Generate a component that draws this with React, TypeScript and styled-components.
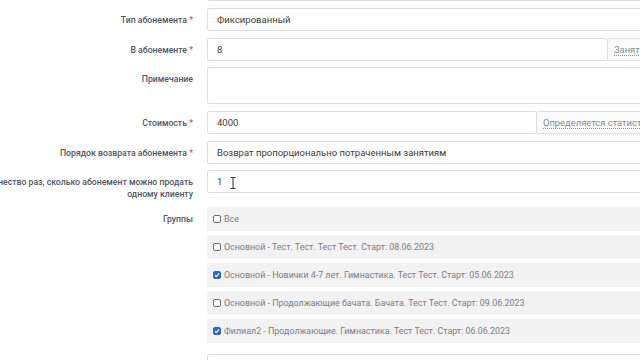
import React from 'react';
import styled, { createGlobalStyle } from 'styled-components';

const GlobalStyle = createGlobalStyle`
  html, body {
    margin: 0;
    padding: 0;
    background: #fff;
    overflow: hidden;
  }
  body {
    width: 640px;
    height: 360px;
    font-family: Roboto, "Noto Sans", "Liberation Sans", sans-serif;
  }
`;

const Page = styled.div`
  width: 640px;
  height: 360px;
  overflow: hidden;
`;

const Form = styled.div`
  width: 817px;
  margin-left: -97px;
  margin-top: -22px;
`;

const Row = styled.div<{ $gap?: number }>`
  display: flex;
  align-items: flex-start;
  gap: 14px;
  margin-bottom: ${(p) => (p.$gap ?? 7)}px;
`;

const Label = styled.div`
  width: 290px;
  flex-shrink: 0;
  box-sizing: border-box;
  padding-top: 6px;
  text-align: right;
  font-size: 8.7px;
  line-height: 12px;
  font-weight: 500;
  color: #4f5563;
`;

const Star = styled.span`
  color: #d9534f;
`;

const Control = styled.div`
  flex: 1;
  display: flex;
  position: relative;
`;

const Input = styled.div<{ $tall?: boolean }>`
  flex: 1;
  box-sizing: border-box;
  height: ${(p) => (p.$tall ? 37 : 23)}px;
  border: 1px solid #dedede;
  border-radius: 2px;
  background: #fff;
  padding: 0 9px;
  font-size: 9.5px;
  line-height: 21px;
  color: #3a3a3a;
`;

const Addon = styled.div<{ $w: number }>`
  width: ${(p) => p.$w}px;
  flex-shrink: 0;
  box-sizing: border-box;
  height: 23px;
  border: 1px solid #dedede;
  border-left: none;
  background: #fafafa;
  padding: 0 6px;
  font-size: 9.4px;
  line-height: 21px;
  color: #8d8d8d;
  white-space: nowrap;
  overflow: hidden;

  span {
    text-decoration: underline dotted;
    text-underline-offset: 2px;
  }
`;

const Cursor = styled.svg`
  position: absolute;
  left: 23px;
  top: 7px;
`;

const Groups = styled.div`
  flex: 1;
  display: flex;
  flex-direction: column;
  gap: 4px;
`;

const GroupItem = styled.label`
  display: flex;
  align-items: center;
  gap: 3px;
  height: 24px;
  padding-left: 6px;
  background: #f2f2f2;
  font-size: 8.9px;
  color: #7a7d84;
`;

const Box = styled.span<{ $checked?: boolean }>`
  width: 8px;
  height: 8px;
  box-sizing: border-box;
  border-radius: 2px;
  border: 1px solid ${(p) => (p.$checked ? '#2a68d4' : '#6d6d6d')};
  background: ${(p) => (p.$checked ? '#2a68d4' : '#fff')};
  display: inline-flex;
  align-items: center;
  justify-content: center;
  flex-shrink: 0;
`;

const Check: React.FC<{ checked?: boolean }> = ({ checked }) => (
  <Box $checked={checked}>
    {checked && (
      <svg width="6" height="6" viewBox="0 0 6 6">
        <path d="M1 3.2 L2.4 4.6 L5 1.4" fill="none" stroke="#fff" strokeWidth="1.2" />
      </svg>
    )}
  </Box>
);

const groups = [
  { title: 'Все', checked: false },
  { title: 'Основной - Тест. Тест. Тест Тест. Старт: 08.06.2023', checked: false },
  { title: 'Основной - Новички 4-7 лет. Гимнастика. Тест Тест. Старт: 05.06.2023', checked: true },
  { title: 'Основной - Продолжающие бачата. Бачата. Тест Тест. Старт: 09.06.2023', checked: false },
  { title: 'Филиал2 - Продолжающие. Гимнастика. Тест Тест. Старт: 06.06.2023', checked: true },
];

export default function App() {
  return (
    <Page>
      <GlobalStyle />
      <Form>
        <Row>
          <Label />
          <Control>
            <Input />
          </Control>
        </Row>
        <Row>
          <Label>
            Тип абонемента <Star>*</Star>
          </Label>
          <Control>
            <Input>Фиксированный</Input>
          </Control>
        </Row>
        <Row $gap={6}>
          <Label>
            В абонементе <Star>*</Star>
          </Label>
          <Control>
            <Input>8</Input>
            <Addon $w={112}>
              <span>Занятий</span>
            </Addon>
          </Control>
        </Row>
        <Row>
          <Label>Примечание</Label>
          <Control>
            <Input $tall />
          </Control>
        </Row>
        <Row>
          <Label>
            Стоимость <Star>*</Star>
          </Label>
          <Control>
            <Input>4000</Input>
            <Addon $w={183}>
              <span>Определяется статистически</span>
            </Addon>
          </Control>
        </Row>
        <Row $gap={6}>
          <Label>
            Порядок возврата абонемента <Star>*</Star>
          </Label>
          <Control>
            <Input>Возврат пропорционально потраченным занятиям</Input>
          </Control>
        </Row>
        <Row>
          <Label>Максимальное количество раз, сколько абонемент можно продать одному клиенту</Label>
          <Control>
            <Input>1</Input>
            <Cursor width="6" height="12" viewBox="0 0 6 12">
              <path d="M0.5 0.5 H5.5 M3 0.5 V11.5 M0.5 11.5 H5.5" fill="none" stroke="#333" strokeWidth="1" />
            </Cursor>
          </Control>
        </Row>
        <Row $gap={11}>
          <Label>Группы</Label>
          <Groups>
            {groups.map((g) => (
              <GroupItem key={g.title}>
                <Check checked={g.checked} />
                {g.title}
              </GroupItem>
            ))}
          </Groups>
        </Row>
        <Row>
          <Label />
          <Control>
            <Input />
          </Control>
        </Row>
      </Form>
    </Page>
  );
}
